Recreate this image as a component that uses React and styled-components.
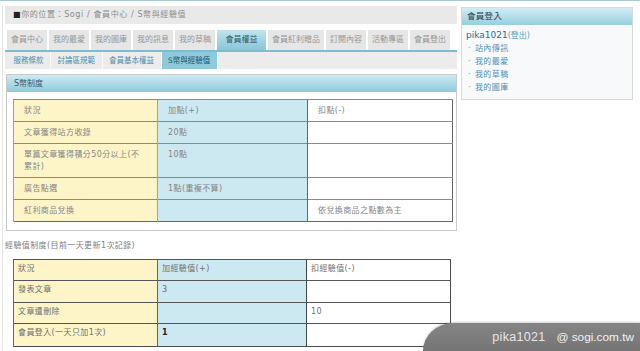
import React from "react";
import styled, { createGlobalStyle, css } from "styled-components";

const GlobalStyle = createGlobalStyle`
    html, body {
        margin: 0;
        padding: 0;
        background: #ffffff;
    }
    body {
        font-family: "DejaVu Sans", "Noto Sans CJK TC", sans-serif;
        font-size: 8px;
        color: #808080;
    }
`;

const Page = styled.div`
    position: relative;
    width: 640px;
    height: 351px;
    overflow: hidden;
    border-top: 1px solid #a9c8d1;
    box-sizing: border-box;
`;

const Layout = styled.div`
    display: flex;
    align-items: flex-start;
    padding: 5px 0 0 2px;
    gap: 4px;
`;

const Main = styled.div`
    width: 452px;
    padding: 0 0 6px 2px;
    border-left: 1px solid #e4e4e4;
    border-bottom: 1px solid #dcdcdc;
`;

const Breadcrumb = styled.div`
    height: 18px;
    line-height: 18px;
    background: #e9e9e9;
    padding-left: 8px;
    letter-spacing: 0.6px;
    color: #8c8c8c;
`;

const Square = styled.span`
    color: #222;
`;

const TabBar = styled.div`
    display: flex;
    gap: 2px;
    margin-top: 6px;
    padding-left: 2px;
    border-bottom: 2px solid #80bccf;
`;

const Tab = styled.div`
    height: 20px;
    line-height: 20px;
    padding: 0 4px;
    background: #e6e6e6;
    color: #969696;
    white-space: nowrap;
    ${p => p.$active && css`
        padding: 0 8.5px;
        background: linear-gradient(#c2e4ee, #89c5d7);
        color: #2b5a6c;
    `}
`;

const SubBar = styled.div`
    display: flex;
    height: 17px;
    background: #ececec;
    padding-left: 2px;
`;

const SubTab = styled.div`
    line-height: 17px;
    padding: 0 6.5px;
    font-size: 7.5px;
    color: #4f8cab;
    border-right: 1px solid #fafafa;
    white-space: nowrap;
    ${p => p.$active && css`
        background: #8ecadb;
        color: #23556a;
    `}
`;

const Section = styled.div`
    margin: 5px 0 0 1px;
    border: 1px solid #c9c9c9;
`;

const SectionHead = styled.div`
    height: 17px;
    line-height: 17px;
    padding-left: 7px;
    background: linear-gradient(#cdeaf3, #8dcadc);
    color: #3d5864;
`;

const SectionBody = styled.div`
    padding: 7px 3px 8px 6px;
`;

const Table = styled.table`
    border-collapse: collapse;
    table-layout: fixed;
    width: ${p => p.$width}px;
    margin-left: ${p => p.$indent || 0}px;
    margin-top: ${p => p.$top || 0}px;
    border: 1px solid ${p => (p.$dark ? "#4a4a4a" : "#666")};
    td {
        vertical-align: top;
        line-height: 12px;
        padding: ${p => (p.$dark ? "3px 4px" : "5px 10px 4px")};
        border-top: 1px solid ${p => (p.$dark ? "#555" : "#8a8a8a")};
        border-left: 1px solid ${p => (p.$dark ? "#666" : "#a0a0a0")};
        color: ${p => (p.$dark ? "#707070" : "#858585")};
        letter-spacing: 0.4px;
    }
    td:nth-child(1) { background: #fdf5c8; }
    td:nth-child(2) { background: #cce8f1; }
    td:nth-child(3) { background: #ffffff; border-left-color: ${p => (p.$dark ? "#444" : "#666")}; }
`;

const Row = styled.tr`
    height: ${p => p.$h}px;
`;

const Strong = styled.span`
    color: #222;
    font-weight: bold;
`;

const Caption = styled.div`
    margin-top: 9px;
    height: 12px;
    line-height: 12px;
    letter-spacing: 0.4px;
    color: #808080;
`;

const Side = styled.div`
    width: 170px;
    margin-top: 1px;
    border: 1px solid #d3dadd;
    background: #f7f9fa;
`;

const SideHead = styled.div`
    height: 17px;
    line-height: 17px;
    padding-left: 5px;
    font-size: 8.5px;
    letter-spacing: 0.3px;
    background: linear-gradient(#d2ecf4, #96cfdf);
    color: #2e3e45;
`;

const SideBody = styled.div`
    padding: 4px 5px 5px 4px;
`;

const User = styled.div`
    line-height: 13px;
    font-size: 9px;
    color: #2d6d8c;
    span {
        font-size: 8px;
        color: #5b9cba;
    }
`;

const SideLink = styled.div`
    line-height: 13px;
    color: #4f90b2;
    padding-left: 2px;
    letter-spacing: 0.4px;
    &::before {
        content: "·";
        color: #9a9a9a;
        margin-right: 4px;
    }
`;

const Watermark = styled.div`
    position: absolute;
    right: 0;
    bottom: 0;
    width: 217px;
    height: 28px;
    display: flex;
    align-items: center;
    justify-content: flex-end;
    gap: 11px;
    padding-right: 6px;
    box-sizing: border-box;
    background: linear-gradient(#858585, #757575);
    border-top-left-radius: 30px 28px;
    box-shadow: 0 -1px 2px rgba(0, 0, 0, 0.18);
    font-family: "Liberation Sans", Arial, sans-serif;
    font-size: 11.8px;
    color: #f2f2f2;
`;

const WatermarkUser = styled.span`
    font-size: 12.5px;
    letter-spacing: 0.3px;
    color: #e6e6e6;
`;

const tabs = ["會員中心", "我的最愛", "我的圖庫", "我的訊息", "我的草稿", "會員權益", "會員紅利贈品", "訂閱內容", "活動專區", "會員登出"];
const subTabs = ["服務條款", "討論區規範", "會員基本權益", "S幣與經驗值"];

const coinRows = [
    { h: 21, a: "狀況", b: "加點(+)", c: "扣點(-)" },
    { h: 22, a: "文章獲得站方收錄", b: "20點", c: "" },
    { h: 34, a: "單篇文章獲得積分50分以上(不累計)", b: "10點", c: "" },
    { h: 21, a: "廣告點選", b: "1點(重複不算)", c: "" },
    { h: 22, a: "紅利商品兌換", b: "", c: "依兌換商品之點數為主" },
];

const expRows = [
    { h: 21, a: "狀況", b: "加經驗值(+)", c: "扣經驗值(-)" },
    { h: 22, a: "發表文章", b: "3", c: "" },
    { h: 21, a: "文章遭刪除", b: "", c: "10" },
    { h: 23, a: "會員登入(一天只加1次)", b: <Strong>1</Strong>, c: "" },
];

const links = ["站內傳訊", "我的最愛", "我的草稿", "我的圖庫"];

export default function App() {
    return (
        <Page>
            <GlobalStyle />
            <Layout>
                <Main>
                    <Breadcrumb><Square>■</Square>你的位置：Sogi / 會員中心 / S幣與經驗值</Breadcrumb>
                    <TabBar>
                        {tabs.map(t => <Tab key={t} $active={t === "會員權益"}>{t}</Tab>)}
                    </TabBar>
                    <SubBar>
                        {subTabs.map(t => <SubTab key={t} $active={t === "S幣與經驗值"}>{t}</SubTab>)}
                    </SubBar>
                    <Section>
                        <SectionHead>S幣制度</SectionHead>
                        <SectionBody>
                            <Table $width={440}>
                                <colgroup>
                                    <col style={{ width: 144 }} />
                                    <col style={{ width: 150 }} />
                                    <col />
                                </colgroup>
                                <tbody>
                                    {coinRows.map(r => (
                                        <Row key={r.a} $h={r.h}>
                                            <td>{r.a}</td>
                                            <td>{r.b}</td>
                                            <td>{r.c}</td>
                                        </Row>
                                    ))}
                                </tbody>
                            </Table>
                        </SectionBody>
                    </Section>
                    <Caption>經驗值制度(目前一天更新1次記錄)</Caption>
                    <Table $width={438} $indent={8} $top={7} $dark>
                        <colgroup>
                            <col style={{ width: 144 }} />
                            <col style={{ width: 149 }} />
                            <col />
                        </colgroup>
                        <tbody>
                            {expRows.map(r => (
                                <Row key={r.a} $h={r.h}>
                                    <td>{r.a}</td>
                                    <td>{r.b}</td>
                                    <td>{r.c}</td>
                                </Row>
                            ))}
                        </tbody>
                    </Table>
                </Main>
                <Side>
                    <SideHead>會員登入</SideHead>
                    <SideBody>
                        <User>pika1021<span>(登出)</span></User>
                        {links.map(l => <SideLink key={l}>{l}</SideLink>)}
                    </SideBody>
                </Side>
            </Layout>
            <Watermark>
                <WatermarkUser>pika1021</WatermarkUser>
                <span>@ sogi.com.tw</span>
            </Watermark>
        </Page>
    );
}
